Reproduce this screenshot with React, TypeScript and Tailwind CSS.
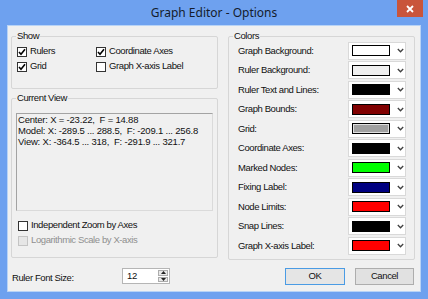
import React from "react";

const font = { fontFamily: '"Liberation Sans", Arial, sans-serif' };

// Small Win8-style checkbox
const CheckBox = ({ checked, disabled }: { checked?: boolean; disabled?: boolean }) => (
  <span
    className={`flex h-[10px] w-[10px] shrink-0 items-center justify-center border ${
      disabled ? "border-[#c4c4c4] bg-[#e6e6e6]" : "border-[#333333] bg-white"
    }`}
  >
    {checked && (
      <svg width="8" height="8" viewBox="0 0 8 8">
        <path d="M1 4 L3 6.2 L7 1.2" fill="none" stroke="#000" strokeWidth="1.6" />
      </svg>
    )}
  </span>
);

const CheckRow = ({ label, checked, disabled }: { label: string; checked?: boolean; disabled?: boolean }) => (
  <div className="flex h-[15px] items-center gap-[3px]">
    <CheckBox checked={checked} disabled={disabled} />
    <span className={disabled ? "text-[#8f8f8f]" : "text-[#111111]"}>{label}</span>
  </div>
);

const GroupBox = ({ title, className, children }: { title: string; className?: string; children: React.ReactNode }) => (
  <div className={`flex flex-col rounded-[2px] border border-[#d6d6d6] ${className ?? ""}`}>
    <div className="-mt-[7px] ml-[4px] w-fit bg-[#f0f0f0] px-[1px] leading-[12px] text-[#111111]">{title}</div>
    {children}
  </div>
);

// Color picker combo
const ColorCombo = ({ color, inner }: { color: string; inner?: string }) => (
  <div className="flex h-[18px] w-[58px] items-center border border-[#d9d9d9] bg-white pl-[3px]">
    <div className="flex h-[11px] w-[38px] border border-black" style={{ background: color }}>
      {inner && <div className="m-0 h-full w-full border border-[#e0e0e0]" style={{ background: inner }} />}
    </div>
    <svg className="ml-[7px]" width="7" height="5" viewBox="0 0 7 5">
      <path d="M0.8 1 L3.5 3.8 L6.2 1" fill="none" stroke="#404040" strokeWidth="1.3" />
    </svg>
  </div>
);

const colors: { label: string; color: string; inner?: string }[] = [
  { label: "Graph Background:", color: "#ffffff" },
  { label: "Ruler Background:", color: "#efefef" },
  { label: "Ruler Text and Lines:", color: "#000000" },
  { label: "Graph Bounds:", color: "#800000" },
  { label: "Grid:", color: "#a0a0a0", inner: "#a0a0a0" },
  { label: "Coordinate Axes:", color: "#000000" },
  { label: "Marked Nodes:", color: "#00ff00" },
  { label: "Fixing Label:", color: "#000080" },
  { label: "Node Limits:", color: "#ff0000" },
  { label: "Snap Lines:", color: "#000000" },
  { label: "Graph X-axis Label:", color: "#ff0000" },
];

export default function App() {
  return (
    <div className="flex h-[299px] w-[428px] flex-col bg-[#6ea1ef] text-[9.5px] tracking-[-0.4px]" style={font}>
      {/* Title bar */}
      <div className="relative flex h-[25px] shrink-0 items-center justify-center">
        <span
          className="text-[12px] tracking-normal text-[#141c2c]"
          style={{ fontFamily: '"Noto Sans", "Open Sans", sans-serif' }}
        >
          Graph Editor - Options
        </span>
        <div className="absolute right-[5px] top-0 flex h-[17px] w-[26px] items-center justify-center bg-[#c9553b]">
          <svg width="8" height="8" viewBox="0 0 8 8">
            <path d="M1 1 L7 7 M7 1 L1 7" stroke="#fff" strokeWidth="1.8" />
          </svg>
        </div>
      </div>

      {/* Client area */}
      <div className="mx-[7px] flex h-[267px] flex-col border border-[#b8d3f6] bg-[#f0f0f0] px-[3px] pt-[10px]">
        <div className="flex items-start gap-[10px]">
          {/* Left column */}
          <div className="flex w-[207px] flex-col">
            <GroupBox title="Show" className="h-[53px]">
              <div className="mt-[2px] grid grid-cols-[79px_1fr] pl-[5px]">
                <CheckRow label="Rulers" checked />
                <CheckRow label="Coordinate Axes" checked />
                <CheckRow label="Grid" checked />
                <CheckRow label="Graph X-axis Label" />
              </div>
            </GroupBox>

            <GroupBox title="Current View" className="mt-[9px] h-[160px]">
              <div className="mx-[4px] mt-[9px] h-[98px] border border-[#a3a3a3] border-b-[#dadada] border-r-[#dadada] bg-[#f0f0f0] pl-[1px] leading-[11px] tracking-[-0.2px] whitespace-nowrap text-[#111111]">
                <div>Center: X = -23.22,&nbsp; F = 14.88</div>
                <div>Model: X: -289.5 ... 288.5,&nbsp; F: -209.1 ... 256.8</div>
                <div>View: X: -364.5 ... 318,&nbsp; F: -291.9 ... 321.7</div>
              </div>
              <div className="mt-[7px] flex flex-col pl-[6px]">
                <CheckRow label="Independent Zoom by Axes" />
                <CheckRow label="Logarithmic Scale by X-axis" disabled />
              </div>
            </GroupBox>
          </div>

          {/* Colors */}
          <GroupBox title="Colors" className="h-[224px] w-[187px]">
            <div className="-mt-[1px] flex flex-col pl-[9px]">
              {colors.map((c) => (
                <div key={c.label} className="flex h-[19.5px] items-center">
                  <span className="w-[110px] text-[#111111]">{c.label}</span>
                  <ColorCombo color={c.color} inner={c.inner} />
                </div>
              ))}
            </div>
          </GroupBox>
        </div>

        {/* Bottom row */}
        <div className="mt-[8px] flex items-start">
          <span className="mt-[3px] w-[111px] pl-[1px] text-[#111111]">Ruler Font Size:</span>
          <div className="flex h-[16px] w-[48px] items-center border border-[#b5b5b5] bg-white">
            <span className="flex-1 pl-[4px] text-[#111111]">12</span>
            <div className="flex h-full w-[12px] flex-col gap-[1px] p-[1px]">
              <div className="flex flex-1 items-center justify-center border border-[#acacac] bg-[#e8e8e8]">
                <svg width="5" height="3" viewBox="0 0 5 3">
                  <path d="M0 3 L2.5 0 L5 3 Z" fill="#222" />
                </svg>
              </div>
              <div className="flex flex-1 items-center justify-center border border-[#acacac] bg-[#e8e8e8]">
                <svg width="5" height="3" viewBox="0 0 5 3">
                  <path d="M0 0 L2.5 3 L5 0 Z" fill="#222" />
                </svg>
              </div>
            </div>
          </div>
          <button className="ml-[115px] flex h-[17px] w-[60px] items-center justify-center border border-[#4a9be4] bg-[#e5e5e5] text-[#111111]">
            OK
          </button>
          <button className="ml-[10px] flex h-[17px] w-[59px] items-center justify-center border border-[#adadad] bg-[#e1e1e1] text-[#111111]">
            Cancel
          </button>
        </div>
      </div>
    </div>
  );
}
